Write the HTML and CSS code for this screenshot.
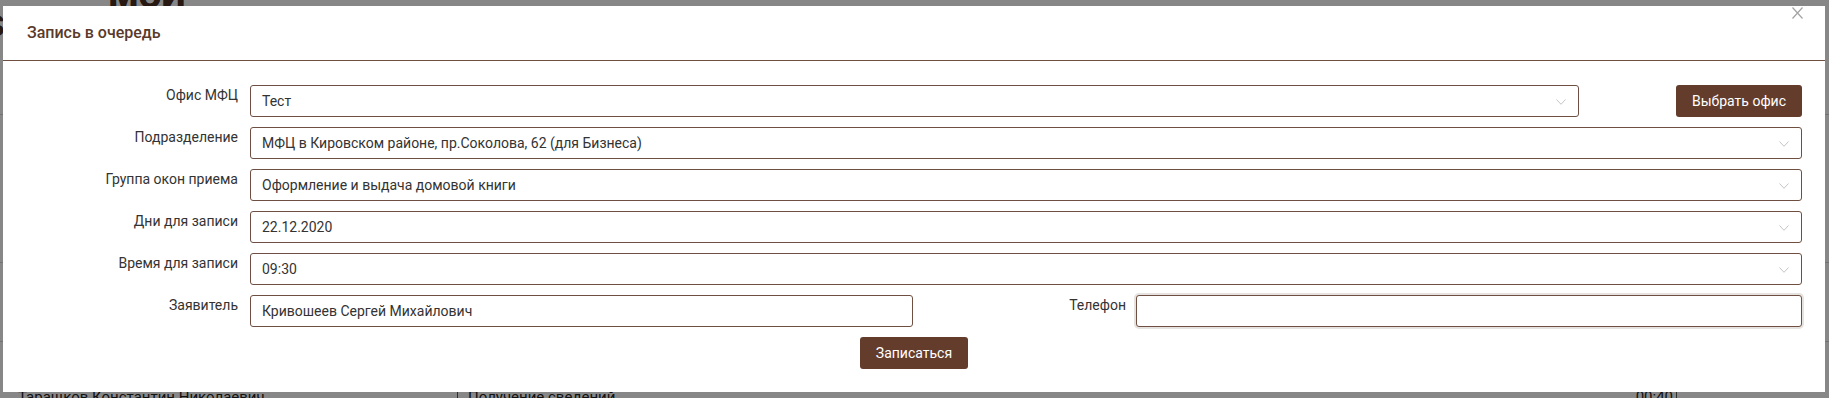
FILE: index.html
```html
<!DOCTYPE html>
<html lang="ru">

<head>
    <meta charset="UTF-8">
    <meta name="viewport" content="width=device-width, initial-scale=1.0">
    <title>Запись в очередь</title>
    <link rel="stylesheet" href="styles.css">
</head>

<body>
    <!-- Страница под модальным окном -->
    <div class="page">
        <div class="page-head">
            <span class="logo-s">S</span>
            <span class="brand">МОЙ</span>
        </div>
        <div class="page-row page-row-tall"></div>
        <div class="page-row page-row-mid"></div>
        <div class="page-row page-row-last">
            <div class="cell-name">Таращков Константин Николаевич</div>
            <div class="cell-info">Получение сведений</div>
            <div class="cell-time">00:40</div>
            <div class="cell-rest"></div>
        </div>
    </div>

    <!-- Модальное окно записи -->
    <div class="overlay">
        <div class="modal">
            <div class="modal-head">
                <h4 class="modal-title">Запись в очередь</h4>
                <button class="close" type="button" aria-label="Закрыть">
                    <svg width="11" height="12" viewBox="0 0 11 12">
                        <path d="M0.5 0.5 L10.5 11.5 M10.5 0.5 L0.5 11.5" stroke="#a3a3a3" stroke-width="1.2" fill="none"/>
                    </svg>
                </button>
            </div>

            <form class="modal-body">
                <div class="form-row">
                    <label class="label">Офис МФЦ</label>
                    <div class="field">
                        <span class="value">Тест</span>
                        <svg class="chevron" width="10" height="6" viewBox="0 0 10 6"><path d="M0.5 0.5 L5 5.3 L9.5 0.5" stroke="#c4c4c4" fill="none"/></svg>
                    </div>
                    <button class="btn btn-office" type="button">Выбрать офис</button>
                </div>

                <div class="form-row">
                    <label class="label">Подразделение</label>
                    <div class="field">
                        <span class="value">МФЦ в Кировском районе, пр.Соколова, 62 (для Бизнеса)</span>
                        <svg class="chevron" width="10" height="6" viewBox="0 0 10 6"><path d="M0.5 0.5 L5 5.3 L9.5 0.5" stroke="#c4c4c4" fill="none"/></svg>
                    </div>
                </div>

                <div class="form-row">
                    <label class="label">Группа окон приема</label>
                    <div class="field">
                        <span class="value">Оформление и выдача домовой книги</span>
                        <svg class="chevron" width="10" height="6" viewBox="0 0 10 6"><path d="M0.5 0.5 L5 5.3 L9.5 0.5" stroke="#c4c4c4" fill="none"/></svg>
                    </div>
                </div>

                <div class="form-row">
                    <label class="label">Дни для записи</label>
                    <div class="field">
                        <span class="value">22.12.2020</span>
                        <svg class="chevron" width="10" height="6" viewBox="0 0 10 6"><path d="M0.5 0.5 L5 5.3 L9.5 0.5" stroke="#c4c4c4" fill="none"/></svg>
                    </div>
                </div>

                <div class="form-row">
                    <label class="label">Время для записи</label>
                    <div class="field">
                        <span class="value">09:30</span>
                        <svg class="chevron" width="10" height="6" viewBox="0 0 10 6"><path d="M0.5 0.5 L5 5.3 L9.5 0.5" stroke="#c4c4c4" fill="none"/></svg>
                    </div>
                </div>

                <div class="form-row">
                    <label class="label">Заявитель</label>
                    <div class="field field-name">
                        <span class="value">Кривошеев Сергей Михайлович</span>
                    </div>
                    <label class="label-phone">Телефон</label>
                    <div class="field field-phone"></div>
                </div>

                <div class="actions">
                    <button class="btn btn-submit" type="button">Записаться</button>
                </div>
            </form>
        </div>
    </div>
</body>

</html>
```

FILE: styles.css
```css
/* Общие настройки */
html, body {
    margin: 0;
    padding: 0;
    height: 100%;
    overflow: hidden;
}

body {
    font-family: Roboto, "Liberation Sans", sans-serif;
    font-size: 14px;
    color: #333;
    background: #fff;
}

/* Страница на заднем плане */
.page-head {
    height: 115px;
    border-bottom: 1px solid #d9d9d9;
    box-sizing: border-box;
    display: flex;
    align-items: flex-start;
}

.logo-s {
    font-size: 30px;
    font-weight: 700;
    color: #4a2e20;
    margin: 8px 0 0 -14px;
}

.brand {
    font-size: 34px;
    font-weight: 900;
    line-height: 30px;
    color: #4a2e20;
    margin: -19px 0 0 104px;
}

.page-row {
    border-bottom: 1px solid #d9d9d9;
    box-sizing: border-box;
}

.page-row-tall {
    height: 148px;
}

.page-row-mid {
    height: 79px;
}

.page-row-last {
    display: flex;
    height: 60px;
    font-size: 15px;
    color: #222;
}

.cell-name {
    width: 439px;
    padding: 46px 0 0 18px;
    border-right: 1px solid #555;
}

.cell-info {
    flex: 1;
    padding: 46px 0 0 10px;
}

.cell-time {
    width: 100px;
    padding: 46px 3px 0 0;
    text-align: right;
    border-right: 1px solid #555;
}

.cell-rest {
    width: 152px;
}

/* Затемнение */
.overlay {
    position: fixed;
    top: 0;
    left: 0;
    right: 0;
    bottom: 0;
    background: rgba(0, 0, 0, 0.47);
}

.modal {
    position: relative;
    margin: 6px 4px 0 3px;
    height: 386px;
    background: #fff;
    box-sizing: border-box;
}

.modal-head {
    height: 55px;
    border-bottom: 1px solid #6f4f40;
    box-sizing: border-box;
    display: flex;
    align-items: center;
    padding: 0 0 2px 24px;
}

.modal-title {
    margin: 0;
    font-size: 16px;
    font-weight: 500;
    color: #5a3a2b;
}

.close {
    position: absolute;
    top: 1px;
    right: 22px;
    padding: 0;
    border: 0;
    background: none;
    width: 11px;
    height: 12px;
    line-height: 0;
}

/* Форма */
.modal-body {
    padding: 24px 23px 23px 15px;
    display: flex;
    flex-direction: column;
    gap: 10px;
    margin: 0;
}

.form-row {
    display: flex;
    align-items: flex-start;
    height: 32px;
}

.label {
    flex: none;
    width: 220px;
    margin-right: 12px;
    text-align: right;
    line-height: 20px;
}

.field {
    flex: 1;
    height: 32px;
    border: 1px solid #6e4f41;
    border-radius: 3px;
    box-sizing: border-box;
    display: flex;
    align-items: center;
    padding: 0 12px 0 11px;
    line-height: 20px;
    background: #fff;
}

.value {
    flex: 1;
}

.chevron {
    flex: none;
    margin-top: 1px;
}

.field-name {
    flex: none;
    width: 663px;
}

.label-phone {
    flex: 1;
    text-align: right;
    margin-right: 10px;
    line-height: 20px;
}

.field-phone {
    flex: none;
    width: 666px;
    box-shadow: 0 0 0 2px #e6e2df;
}

.btn {
    height: 32px;
    border: 0;
    border-radius: 3px;
    background: #643c2c;
    color: #fff;
    font-family: Roboto, "Liberation Sans", sans-serif;
    font-size: 14px;
    padding: 0;
    cursor: pointer;
}

.btn-office {
    flex: none;
    width: 126px;
    margin-left: 97px;
}

.actions {
    display: flex;
    justify-content: center;
    padding-left: 8px;
}

.btn-submit {
    width: 108px;
}
```
